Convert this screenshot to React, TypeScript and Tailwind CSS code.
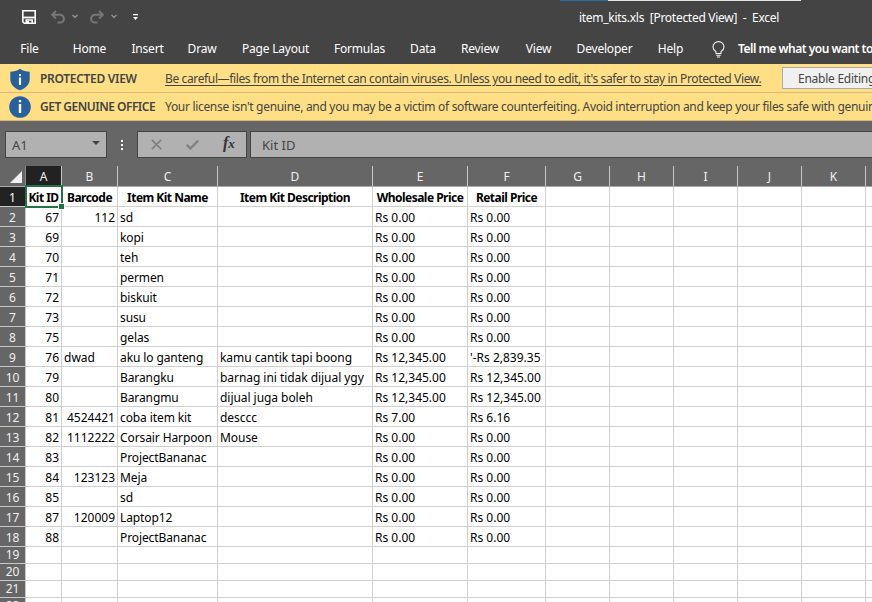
type Column = { id: string; width: string; head?: string; text?: string };

const columns: Column[] = [
  { id: 'A', width: 'w-[36px]', head: 'Kit ID' },
  { id: 'B', width: 'w-[56px]', head: 'Barcode' },
  { id: 'C', width: 'w-[100px]', head: 'Item Kit Name', text: 'tracking-[-0.1px]' },
  { id: 'D', width: 'w-[155px]', head: 'Item Kit Description', text: 'tracking-[-0.05px]' },
  { id: 'E', width: 'w-[95px]', head: 'Wholesale Price' },
  { id: 'F', width: 'w-[78px]', head: 'Retail Price' },
  { id: 'G', width: 'w-[64px]' },
  { id: 'H', width: 'w-[64px]' },
  { id: 'I', width: 'w-[64px]' },
  { id: 'J', width: 'w-[64px]' },
  { id: 'K', width: 'w-[64px]' },
  { id: '', width: 'w-[64px]' },
];

const rows: string[][] = [
  ['67', '112', 'sd', '', 'Rs 0.00', 'Rs 0.00'],
  ['69', '', 'kopi', '', 'Rs 0.00', 'Rs 0.00'],
  ['70', '', 'teh', '', 'Rs 0.00', 'Rs 0.00'],
  ['71', '', 'permen', '', 'Rs 0.00', 'Rs 0.00'],
  ['72', '', 'biskuit', '', 'Rs 0.00', 'Rs 0.00'],
  ['73', '', 'susu', '', 'Rs 0.00', 'Rs 0.00'],
  ['75', '', 'gelas', '', 'Rs 0.00', 'Rs 0.00'],
  ['76', 'dwad', 'aku lo ganteng', 'kamu cantik tapi boong', 'Rs 12,345.00', "'-Rs 2,839.35"],
  ['79', '', 'Barangku', 'barnag ini tidak dijual ygy', 'Rs 12,345.00', 'Rs 12,345.00'],
  ['80', '', 'Barangmu', 'dijual juga boleh', 'Rs 12,345.00', 'Rs 12,345.00'],
  ['81', '4524421', 'coba item kit', 'desccc', 'Rs 7.00', 'Rs 6.16'],
  ['82', '1112222', 'Corsair Harpoon', 'Mouse', 'Rs 0.00', 'Rs 0.00'],
  ['83', '', 'ProjectBananac', '', 'Rs 0.00', 'Rs 0.00'],
  ['84', '123123', 'Meja', '', 'Rs 0.00', 'Rs 0.00'],
  ['85', '', 'sd', '', 'Rs 0.00', 'Rs 0.00'],
  ['87', '120009', 'Laptop12', '', 'Rs 0.00', 'Rs 0.00'],
  ['88', '', 'ProjectBananac', '', 'Rs 0.00', 'Rs 0.00'],
  [],
  [],
  [],
  [],
];

const tabs = [
  { label: 'File', box: 'w-[59px]' },
  { label: 'Home', box: 'w-[61px]' },
  { label: 'Insert', box: 'w-[55px]' },
  { label: 'Draw', box: 'w-[54px]' },
  { label: 'Page Layout', box: 'w-[93px]' },
  { label: 'Formulas', box: 'w-[75px]' },
  { label: 'Data', box: 'w-[52px]' },
  { label: 'Review', box: 'w-[62px]' },
  { label: 'View', box: 'w-[55px]' },
  { label: 'Developer', box: 'w-[77px]' },
  { label: 'Help', box: 'w-[55px]' },
];

function TitleBar() {
  return (
    <div className="relative flex h-[34px] items-center text-white">
      <div className="absolute left-[560px] top-0 flex h-px w-[241px]">
        <span className="w-12 bg-[#2a6ea5]" />
        <span className="flex-1 bg-[#e4e4e4]" />
      </div>
      <svg className="ml-[22px] h-[14px] w-[14px] shrink-0" viewBox="0 0 14 14" fill="none" stroke="#fff" strokeWidth="1.6">
        <path d="M.8.8h12.400v12.400H2.300L.8 11.700z" />
        <path d="M1 7.500h12" strokeWidth="1.800" />
        <path d="M4.200 13.500V10h6v3.500" strokeWidth="1.500" />
        <path d="M5 11h2v2H5z" fill="#fff" stroke="none" />
      </svg>
      <svg className="ml-[15px] h-[14px] w-[14px] shrink-0" viewBox="0 0 14 14" fill="none" stroke="#777" strokeWidth="2">
        <path d="M5 1 1.2 4.8 5 8.6M1.5 4.8H9a3.8 3.8 0 0 1 0 7.8H6.5" />
      </svg>
      <svg className="ml-[7px] mt-[-2px] h-[5px] w-[6px] shrink-0" viewBox="0 0 6 5" fill="none" stroke="#999" strokeWidth="1.3">
        <path d="m.5 1 2.500 2.400L5.500 1" />
      </svg>
      <svg className="ml-[12px] h-[14px] w-[14px] shrink-0" viewBox="0 0 14 14" fill="none" stroke="#777" strokeWidth="2">
        <path d="M9 1l3.800 3.800L9 8.600M12.500 4.800H5a3.800 3.800 0 0 0 0 7.800h2.500" />
      </svg>
      <svg className="ml-[7px] mt-[-2px] h-[5px] w-[6px] shrink-0" viewBox="0 0 6 5" fill="none" stroke="#999" strokeWidth="1.3">
        <path d="m.5 1 2.500 2.400L5.500 1" />
      </svg>
      <svg className="ml-[16px] h-[7px] w-[6px] shrink-0" viewBox="0 0 6 7" fill="#fff">
        <path d="M0 0h5v1.200H0zM0 3h5L2.500 6z" />
      </svg>
      <span className="ml-[440px] mt-[2px] whitespace-pre tracking-[-0.28px]">item_kits.xls  [Protected View]  -  Excel</span>
    </div>
  );
}

function Ribbon() {
  return (
    <div className="flex h-[30px] items-center text-white">
      <div className="flex tracking-[-0.2px]">
        {tabs.map((t) => (
          <span key={t.label} className={`${t.box} shrink-0 whitespace-nowrap text-center`}>{t.label}</span>
        ))}
      </div>
      <svg className="ml-[14px] h-[17px] w-[13px] shrink-0" viewBox="0 0 13 17" fill="none" stroke="#f4f4f4" strokeWidth="1.1">
        <path d="M4 12.500V10.600C2.200 9.300 1 8 1 5.900a5.500 5.300 0 0 1 11 0c0 2.100-1.200 3.400-3 4.700v1.900zM4.200 14.300h4.600M5 16h3" />
      </svg>
      <span className="ml-[13px] whitespace-nowrap font-semibold tracking-[-0.5px]">Tell me what you want to</span>
    </div>
  );
}

function Notices() {
  return (
    <div className="text-[#444]">
      <div className="flex h-[29px] items-center border-b border-[#dcb878] bg-[#ffdf85]">
        <svg className="ml-[9px] mt-[2px] h-[23px] w-[22px] shrink-0" viewBox="0 0 22 23">
          <path d="M11 .8C8 3 4.500 3.800 1.300 3.800V11c0 5.500 4 9.300 9.700 11.300 5.700-2 9.700-5.800 9.700-11.300V3.800C17.500 3.800 14 3 11 .8z" fill="#27609a" />
          <path d="M10 6h2v2h-2zM9.900 9.500h2.200V17H9.900z" fill="#fff" />
        </svg>
        <span className="ml-[9px] mt-[2px] w-[125px] shrink-0 whitespace-nowrap font-semibold tracking-[-0.3px]">PROTECTED VIEW</span>
        <span className="mt-[2px] w-[617px] shrink-0 whitespace-nowrap tracking-[-0.37px] underline underline-offset-2">
          Be careful—files from the Internet can contain viruses. Unless you need to edit, it's safer to stay in Protected View.
        </span>
        <span className="flex h-[22px] w-[110px] shrink-0 items-center border border-[#aaa] bg-[#f0f0f0] pl-[15px] pt-px tracking-[-0.25px]">Enable Editing</span>
      </div>
      <div className="flex h-[28px] items-center border-b border-[#dcb878] bg-[#ffdf85]">
        <svg className="ml-[9px] h-[22px] w-[22px] shrink-0" viewBox="0 0 22 22">
          <circle cx="11" cy="11" r="10.800" fill="#27609a" />
          <path d="M9.800 4h2.400v2.300H9.800zM9.800 8h2.400v9H9.800z" fill="#fff" />
        </svg>
        <span className="ml-[9px] mt-px w-[125px] shrink-0 whitespace-nowrap font-semibold tracking-[-0.5px]">GET GENUINE OFFICE</span>
        <span className="mt-px whitespace-nowrap tracking-[-0.31px]">
          Your license isn't genuine, and you may be a victim of software counterfeiting. Avoid interruption and keep your files safe with genuine
        </span>
      </div>
    </div>
  );
}

function FormulaBar() {
  return (
    <div className="flex h-[45px] items-start pl-[5px] pt-[10px] text-[13px] text-[#444]">
      <div className="flex h-[27px] w-[102px] shrink-0 items-center justify-between border border-[#444] bg-[#b1b1b1] pl-[6px] pr-[6px]">
        <span>A1</span>
        <svg className="mt-[-3px] h-[4px] w-[8px]" viewBox="0 0 8 4" fill="#444"><path d="M0 0h8L4 4z" /></svg>
      </div>
      <div className="flex h-[27px] w-[30px] shrink-0 flex-col items-center justify-center gap-[2px]">
        <i className="h-[2px] w-[2px] bg-white" />
        <i className="h-[2px] w-[2px] bg-white" />
        <i className="h-[2px] w-[2px] bg-white" />
      </div>
      <div className="flex h-[27px] w-[110px] shrink-0 items-center border border-[#444] bg-[#b1b1b1] pl-[13px]">
        <svg className="h-[11px] w-[11px]" viewBox="0 0 11 11" stroke="#808080" strokeWidth="1.700"><path d="m.8.8 9.400 9.400M10.200.8.8 10.200" /></svg>
        <svg className="ml-[24px] h-[11px] w-[13px]" viewBox="0 0 13 11" fill="none" stroke="#808080" strokeWidth="2.300"><path d="m.8 5.800 3.700 3.700L12.200 1.500" /></svg>
        <span className="ml-[24px] mt-[-3px] font-['Liberation_Serif',serif] text-[16px] font-bold italic text-[#333]">
          f<span className="text-[13px]">x</span>
        </span>
      </div>
      <div className="ml-[3px] flex h-[27px] flex-1 items-center border border-r-0 border-[#444] bg-[#b1b1b1] pl-[11px]">Kit ID</div>
    </div>
  );
}

function Sheet() {
  return (
    <div className="bg-white">
      <div className="flex h-[21px] w-max border-b border-[#ababab] bg-[#666] text-[#f0f0f0]">
        <div className="flex h-[20px] w-[26px] shrink-0 items-end justify-end border-r border-[#8a8a8a] pb-[3px] pr-[3px]">
          <svg className="h-[12px] w-[12px]" viewBox="0 0 12 12" fill="#f0f0f0"><path d="M12 0v12H0z" /></svg>
        </div>
        {columns.map((c, i) => (
          <div key={c.id} className={`${c.width} ${i === 0 ? 'bg-[#222]' : ''} flex h-[20px] shrink-0 items-center justify-center border-r border-[#c8c8c8] pt-[2px]`}>{c.id}</div>
        ))}
      </div>
      <div className="relative flex h-[20px] w-max">
        <div className="flex w-[26px] shrink-0 items-center justify-center border-b border-r border-[#c8c8c8] bg-[#222] pt-[2px] text-white">1</div>
        {columns.map((c) => (
          <div key={c.id} className={`${c.width} flex shrink-0 items-center justify-center whitespace-nowrap border-b border-r border-[#d0d0d0] pt-[2px] font-bold tracking-[-0.52px] text-black`}>{c.head}</div>
        ))}
        <div className="absolute left-[25px] top-[-2px] h-[23px] w-[38px] border-2 border-[#217346]" />
        <div className="absolute left-[58px] top-[16px] h-[7px] w-[7px] border border-white bg-[#217346]" />
      </div>
      {rows.map((r, i) => (
        <div key={i} className={`${i < 17 ? 'h-[20px]' : 'h-[17px]'} flex w-max`}>
          <div className={`${i < 17 ? 'pt-[2px]' : ''} flex w-[26px] shrink-0 items-center justify-center border-b border-r border-[#c8c8c8] bg-[#666] text-[#f0f0f0]`}>{i + 2}</div>
          {columns.map((c, j) => {
            const value = r[j] ?? '';
            const numeric = j < 2 && /^\d+$/.test(value);
            return (
              <div key={c.id} className={`${c.width} ${c.text ?? ''} ${numeric ? 'justify-end' : ''} flex shrink-0 items-center whitespace-nowrap border-b border-r border-[#d0d0d0] px-[2px] pt-[2px] text-black`}>{value}</div>
            );
          })}
        </div>
      ))}
    </div>
  );
}

export default function App() {
  return (
    <div className="h-[602px] w-[872px] overflow-hidden bg-[#666] font-['Noto_Sans',sans-serif] text-[12px] leading-[16px]">
      <div className="bg-[#444]">
        <TitleBar />
        <Ribbon />
      </div>
      <Notices />
      <FormulaBar />
      <Sheet />
    </div>
  );
}
